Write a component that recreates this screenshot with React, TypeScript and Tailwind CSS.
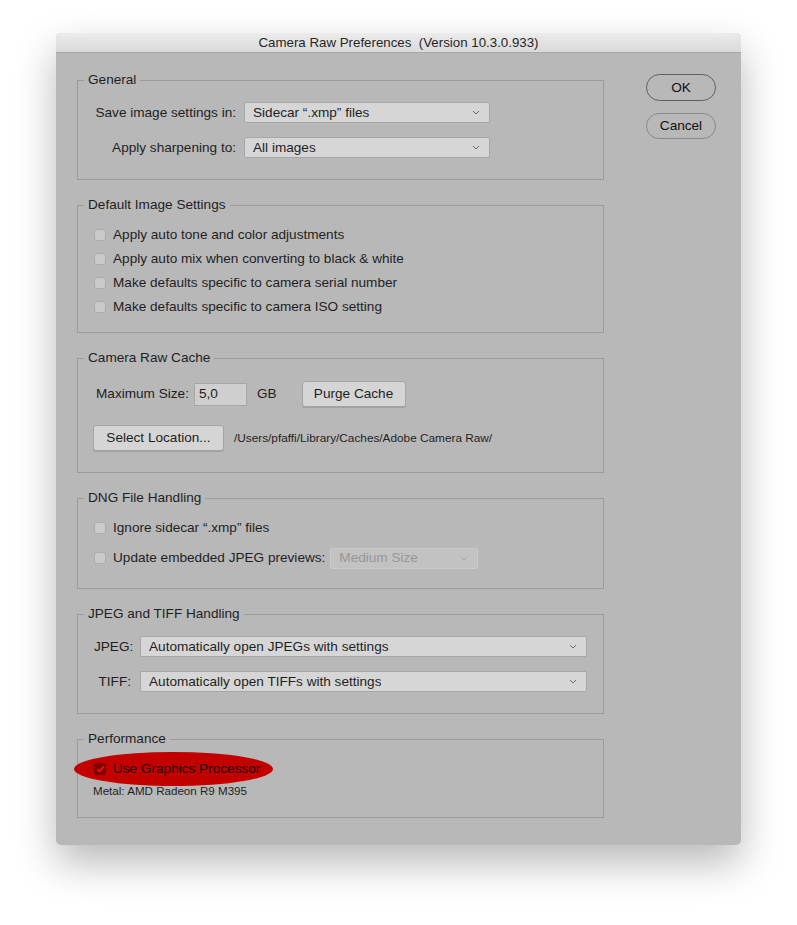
import type { ReactNode } from "react";

const font = { fontFamily: '"Liberation Sans", Arial, sans-serif' };

function Chevron({ muted = false }: { muted?: boolean }) {
  return (
    <svg width="8" height="5" viewBox="0 0 8 5" className="shrink-0">
      <path d="M1 1 L4 4 L7 1" fill="none" stroke={muted ? "#a8a8a8" : "#6a6a6a"} strokeWidth="1" />
    </svg>
  );
}

function Select({ value, className = "", disabled = false }: { value: string; className?: string; disabled?: boolean }) {
  return (
    <div
      className={`h-[21px] flex items-center justify-between pl-[8px] pr-[9px] rounded-[2px] border ${
        disabled ? "bg-[#c2c2c2] border-[#cbcbcb] text-[#989898]" : "bg-[#d6d6d6] border-[#a6a6a6] text-[#1f1f1f]"
      } ${className}`}
    >
      <span className="truncate">{value}</span>
      <Chevron muted={disabled} />
    </div>
  );
}

function Checkbox() {
  return <span className="inline-block w-[12px] h-[12px] rounded-[3px] border border-[#acacac] bg-[#cacaca] shrink-0" />;
}

function CheckRow({ label }: { label: string }) {
  return (
    <div className="h-[24px] flex items-center gap-[7px]">
      <Checkbox />
      <span>{label}</span>
    </div>
  );
}

function Group({ title, children, className = "" }: { title: string; children: ReactNode; className?: string }) {
  return (
    <fieldset className="border border-[#9b9b9b] p-0">
      <legend className="ml-[6px] px-[4px] leading-[16px] text-[#1f1f1f]">{title}</legend>
      <div className={className}>{children}</div>
    </fieldset>
  );
}

function PushButton({ label, className = "" }: { label: string; className?: string }) {
  return (
    <div
      className={`h-[26px] flex items-center justify-center rounded-[3px] border border-[#a4a4a4] bg-[#d5d5d5] shadow-[0_1px_0_rgba(0,0,0,0.12)] text-[#1f1f1f] whitespace-nowrap ${className}`}
    >
      {label}
    </div>
  );
}

export default function App() {
  return (
    <div className="min-h-[925px] bg-white pt-[33px] pl-[56px]" style={font}>
      <div className="w-[685px] h-[812px] rounded-[5px] bg-[#b8b8b8] shadow-[0_18px_40px_rgba(0,0,0,0.28)] flex flex-col overflow-hidden text-[13.6px] leading-[16px] text-[#1f1f1f]">
        {/* title bar */}
        <div className="h-[20px] shrink-0 flex items-center justify-center bg-gradient-to-b from-[#ececec] to-[#d9d9d9] border-b border-[#a9a9a9] text-[13.3px] text-[#262626] whitespace-pre">
          Camera Raw Preferences  (Version 10.3.0.933)
        </div>

        <div className="flex">
          {/* groups */}
          <div className="ml-[21px] mt-[19px] w-[527px] flex flex-col gap-[17px]">
            <Group title="General" className="pt-[14px] pb-[21px] pl-[10px]">
              <div className="grid grid-cols-[148px_246px] gap-x-[8px] gap-y-[14px] items-center">
                <span className="text-right whitespace-nowrap">Save image settings in:</span>
                <Select value={"Sidecar \u201C.xmp\u201D files"} />
                <span className="text-right whitespace-nowrap">Apply sharpening to:</span>
                <Select value="All images" />
              </div>
            </Group>

            <Group title="Default Image Settings" className="pt-[10px] pb-[13px] pl-[16px]">
              <CheckRow label="Apply auto tone and color adjustments" />
              <CheckRow label="Apply auto mix when converting to black & white" />
              <CheckRow label="Make defaults specific to camera serial number" />
              <CheckRow label="Make defaults specific to camera ISO setting" />
            </Group>

            <Group title="Camera Raw Cache" className="pt-[15px] pb-[21px] pl-[15px]">
              <div className="flex items-center h-[26px]">
                <span className="ml-[3px]">Maximum Size:</span>
                <div className="ml-[5px] w-[53px] h-[23px] border border-[#a6a6a6] bg-[#cfcfcf] pl-[4px] flex items-center">5,0</div>
                <span className="ml-[10px]">GB</span>
                <PushButton label="Purge Cache" className="ml-[25px] w-[104px]" />
              </div>
              <div className="flex items-center h-[26px] mt-[18px]">
                <PushButton label="Select Location..." className="w-[131px]" />
                <span className="ml-[10px] text-[11.8px]">/Users/pfaffi/Library/Caches/Adobe Camera Raw/</span>
              </div>
            </Group>

            <Group title="DNG File Handling" className="pt-[10px] pb-[19px] pl-[16px]">
              <CheckRow label={"Ignore sidecar \u201C.xmp\u201D files"} />
              <div className="h-[22px] mt-[7px] flex items-center gap-[7px]">
                <Checkbox />
                <span className="whitespace-nowrap">Update embedded JPEG previews:</span>
                <Select value="Medium Size" disabled className="w-[148px] ml-[-2px]" />
              </div>
            </Group>

            <Group title="JPEG and TIFF Handling" className="pt-[14px] pb-[21px] pl-[16px] pr-[16px]">
              <div className="grid grid-cols-[37px_1fr] gap-x-[9px] gap-y-[14px] items-center">
                <span className="text-right">JPEG:</span>
                <Select value="Automatically open JPEGs with settings" />
                <span className="text-right">TIFF:</span>
                <Select value="Automatically open TIFFs with settings" />
              </div>
            </Group>

            <Group title="Performance" className="pt-[11px] pb-[19px] pl-[16px]">
              <div className="relative h-[22px] flex items-center">
                <div className="absolute left-[-20px] top-[-6px] w-[199px] h-[34px] rounded-[50%] bg-[#c30000]" />
                <div className="relative flex items-center gap-[7px]">
                  <span className="w-[12px] h-[12px] rounded-[3px] bg-[#7c0000] flex items-center justify-center">
                    <svg width="9" height="8" viewBox="0 0 9 8">
                      <path d="M1.2 4.2 L3.5 6.4 L7.8 1.4" fill="none" stroke="#f01010" strokeWidth="1.8" />
                    </svg>
                  </span>
                  <span className="text-[#1c0000]">Use Graphics Processor</span>
                </div>
              </div>
              <div className="mt-[4px] text-[11.6px] leading-[14px] ml-[-1px]">Metal: AMD Radeon R9 M395</div>
            </Group>
          </div>

          {/* buttons */}
          <div className="ml-[42px] mt-[21px] w-[70px] flex flex-col gap-[12px]">
            <div className="h-[27px] rounded-full border border-[#5f5f5f] flex items-center justify-center text-[#111]">OK</div>
            <div className="h-[26px] rounded-full border border-[#8a8a8a] flex items-center justify-center text-[#111]">Cancel</div>
          </div>
        </div>
      </div>
    </div>
  );
}
